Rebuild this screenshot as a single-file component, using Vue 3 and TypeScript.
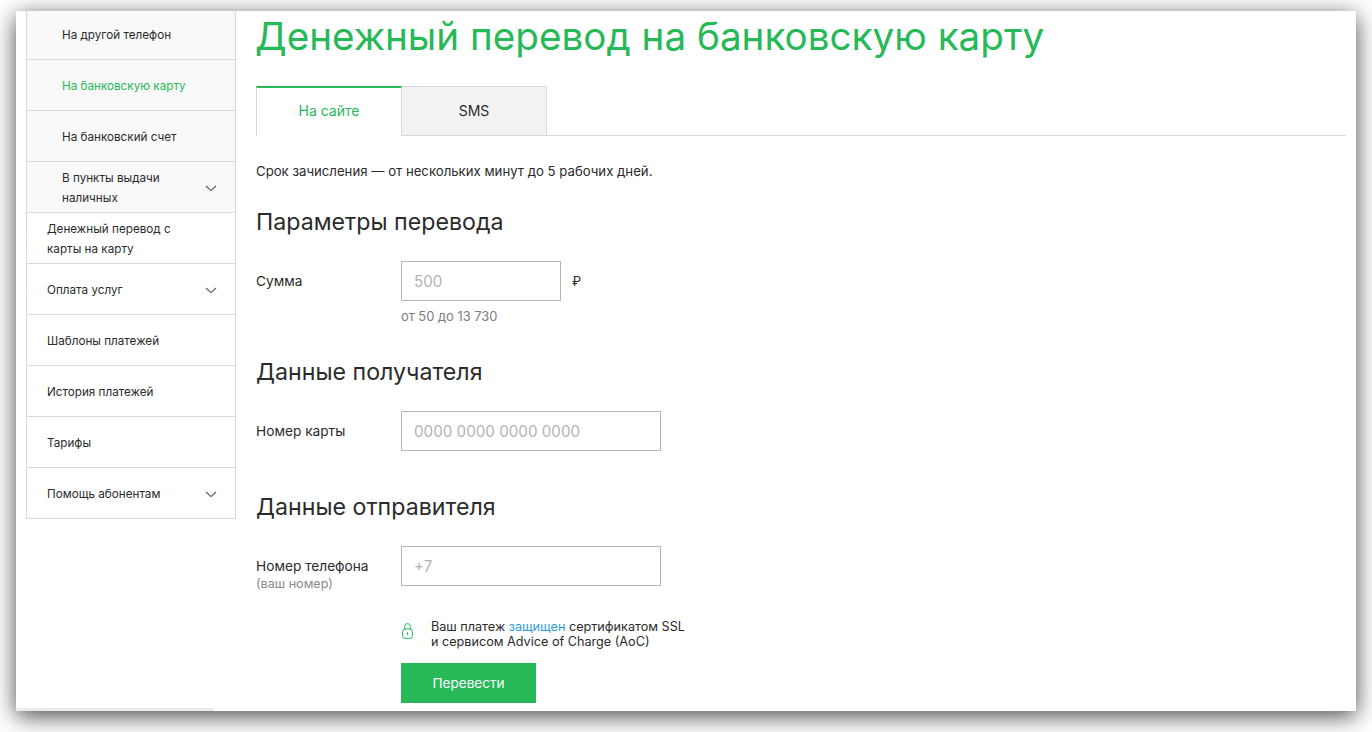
<script setup lang="ts">
interface Item { label: string; sub?: boolean; active?: boolean; arrow?: boolean; first?: boolean }
const items: Item[] = [
  { label: 'На другой телефон', sub: true, first: true },
  { label: 'На банковскую карту', sub: true, active: true },
  { label: 'На банковский счет', sub: true },
  { label: 'В пункты выдачи наличных', sub: true, arrow: true },
  { label: 'Денежный перевод с карты на карту' },
  { label: 'Оплата услуг', arrow: true },
  { label: 'Шаблоны платежей' },
  { label: 'История платежей' },
  { label: 'Тарифы' },
  { label: 'Помощь абонентам', arrow: true },
]
</script>

<template>
  <div class="screen">
    <div class="window">
      <aside class="side">
        <a
          v-for="it in items"
          :key="it.label"
          class="item"
          :class="{ sub: it.sub, active: it.active, first: it.first }"
        >
          <span class="item-text">{{ it.label }}</span>
          <svg v-if="it.arrow" class="chev" width="12" height="7" viewBox="0 0 12 7">
            <path d="M1 1l5 4.6L11 1" fill="none" stroke="#555" stroke-width="1.1" />
          </svg>
        </a>
      </aside>

      <main class="main">
        <h1 class="title">Денежный перевод на банковскую карту</h1>
        <div class="tabs">
          <div class="tab on">На сайте</div>
          <div class="tab">SMS</div>
        </div>
        <p class="note">Срок зачисления — от нескольких минут до 5 рабочих дней.</p>

        <h2 class="h2 h-first">Параметры перевода</h2>
        <div class="row">
          <label class="lbl">Сумма</label>
          <input class="input short" placeholder="500" />
          <span class="rub">₽</span>
        </div>
        <div class="hint">от 50 до 13 730</div>

        <h2 class="h2 h-second">Данные получателя</h2>
        <div class="row">
          <label class="lbl">Номер карты</label>
          <input class="input" placeholder="0000 0000 0000 0000" />
        </div>

        <h2 class="h2 h-third">Данные отправителя</h2>
        <div class="row">
          <label class="lbl">Номер телефона<small>(ваш номер)</small></label>
          <input class="input" placeholder="+7" />
        </div>

        <div class="secure">
          <svg class="lock" width="11" height="16" viewBox="0 0 11 16">
            <path d="M2.7 6.5V3.4a2.8 2.8 0 0 1 5.6 0v3.1" fill="none" stroke="#27b858" stroke-width="1" />
            <rect x="0.6" y="6" width="9.8" height="9.4" rx="2.6" fill="none" stroke="#27b858" stroke-width="1" />
            <path d="M5.5 9.3v2.6" stroke="#27b858" stroke-width="1.2" />
          </svg>
          <p>Ваш платеж <a class="link">защищен</a> сертификатом SSL<br />и сервисом Advice of Charge (AoC)</p>
        </div>
        <button class="btn">Перевести</button>
      </main>
      <div class="strip"></div>
    </div>
  </div>
</template>

<style>
html, body { background: #fff; overflow: hidden; }
</style>

<style scoped>
.screen {
  width: 1372px;
  height: 732px;
  box-sizing: border-box;
  padding: 11px 16px 21px;
  overflow: hidden;
  font-family: Inter, "Liberation Sans", sans-serif;
  color: #2b2b2b;
}
.window {
  position: relative;
  height: 700px;
  background: #fff;
  display: flex;
  overflow: hidden;
  box-shadow: 0 5px 22px rgba(0, 0, 0, 0.72);
}
.side {
  width: 210px;
  margin-left: 10px;
  flex: none;
  align-self: flex-start;
  box-sizing: border-box;
  border: 1px solid #d9d9d9;
  border-width: 0 1px;
}
.item {
  display: flex;
  align-items: center;
  justify-content: space-between;
  height: 51px;
  box-sizing: border-box;
  border-bottom: 1px solid #d9d9d9;
  padding: 2px 18px 0 20px;
  font-size: 11.7px;
  line-height: 20px;
}
.item.first { height: 49px; padding-top: 0; }
.item.sub { background: #f9f9f9; padding-left: 35px; }
.item.active { color: #27b858; }
.item-text { max-width: 135px; }
.chev { flex: none; }
.main {
  margin-left: 20px;
  width: 1090px;
  flex: none;
}
.title {
  margin: 0 0 0 -1px;
  font-size: 38.65px;
  line-height: 50px;
  font-weight: 400;
  color: #27b858;
}
.tabs {
  display: flex;
  margin-top: 25px;
  height: 50px;
  box-sizing: border-box;
  border-bottom: 1px solid #d9d9d9;
}
.tab {
  width: 145px;
  height: 50px;
  box-sizing: border-box;
  background: #f2f2f2;
  border: 1px solid #d9d9d9;
  border-left: 0;
  padding-bottom: 2px;
  display: flex;
  align-items: center;
  justify-content: center;
  font-size: 14px;
}
.tab.on {
  width: 146px;
  background: #fff;
  color: #27b858;
  border-top: 2px solid #27b858;
  border-left: 1px solid #d9d9d9;
  border-bottom: 0;
  padding-bottom: 3px;
}
.note {
  margin: 25px 0 0;
  font-size: 13.2px;
  line-height: 20px;
}
.h2 {
  margin: 0;
  font-size: 23.2px;
  line-height: 30px;
  font-weight: 400;
}
.h-first { margin-top: 26px; }
.h-second { margin-top: 32px; }
.h-third { margin-top: 41px; }
.row {
  display: flex;
  align-items: flex-start;
  margin-top: 24px;
  height: 40px;
}
.lbl {
  width: 145px;
  flex: none;
  padding-top: 12px;
  font-size: 13.7px;
  line-height: 17px;
}
.lbl small {
  display: block;
  font-size: 12.6px;
  color: #8a8a8a;
}
.input {
  width: 260px;
  height: 40px;
  box-sizing: border-box;
  border: 1px solid #b5b5b5;
  padding: 0 12px;
  font: 15.2px Inter, "Liberation Sans", sans-serif;
  outline: 0;
  background: #fff;
}
.input::placeholder { color: #b3b3b3; opacity: 1; }
.input.short { width: 160px; }
.rub { margin-left: 11px; font-size: 13px; line-height: 40px; }
.hint {
  margin: 7px 0 0 145px;
  font-size: 12.9px;
  line-height: 17px;
  color: #7d7d7d;
}
.secure {
  display: flex;
  align-items: flex-start;
  margin: 33px 0 0 146px;
  font-size: 12.65px;
  line-height: 15px;
}
.secure p { margin: 0 0 0 18px; }
.lock { flex: none; margin-top: 4px; }
.link { color: #2d9cdb; }
.btn {
  display: block;
  margin: 14px 0 0 145px;
  width: 135px;
  height: 40px;
  border: 0;
  background: #27b858;
  color: #fff;
  font: 13.6px Inter, "Liberation Sans", sans-serif;
}
.strip {
  position: absolute;
  left: 0;
  bottom: 0;
  width: 198px;
  height: 3px;
  background: #ebebeb;
}
</style>
